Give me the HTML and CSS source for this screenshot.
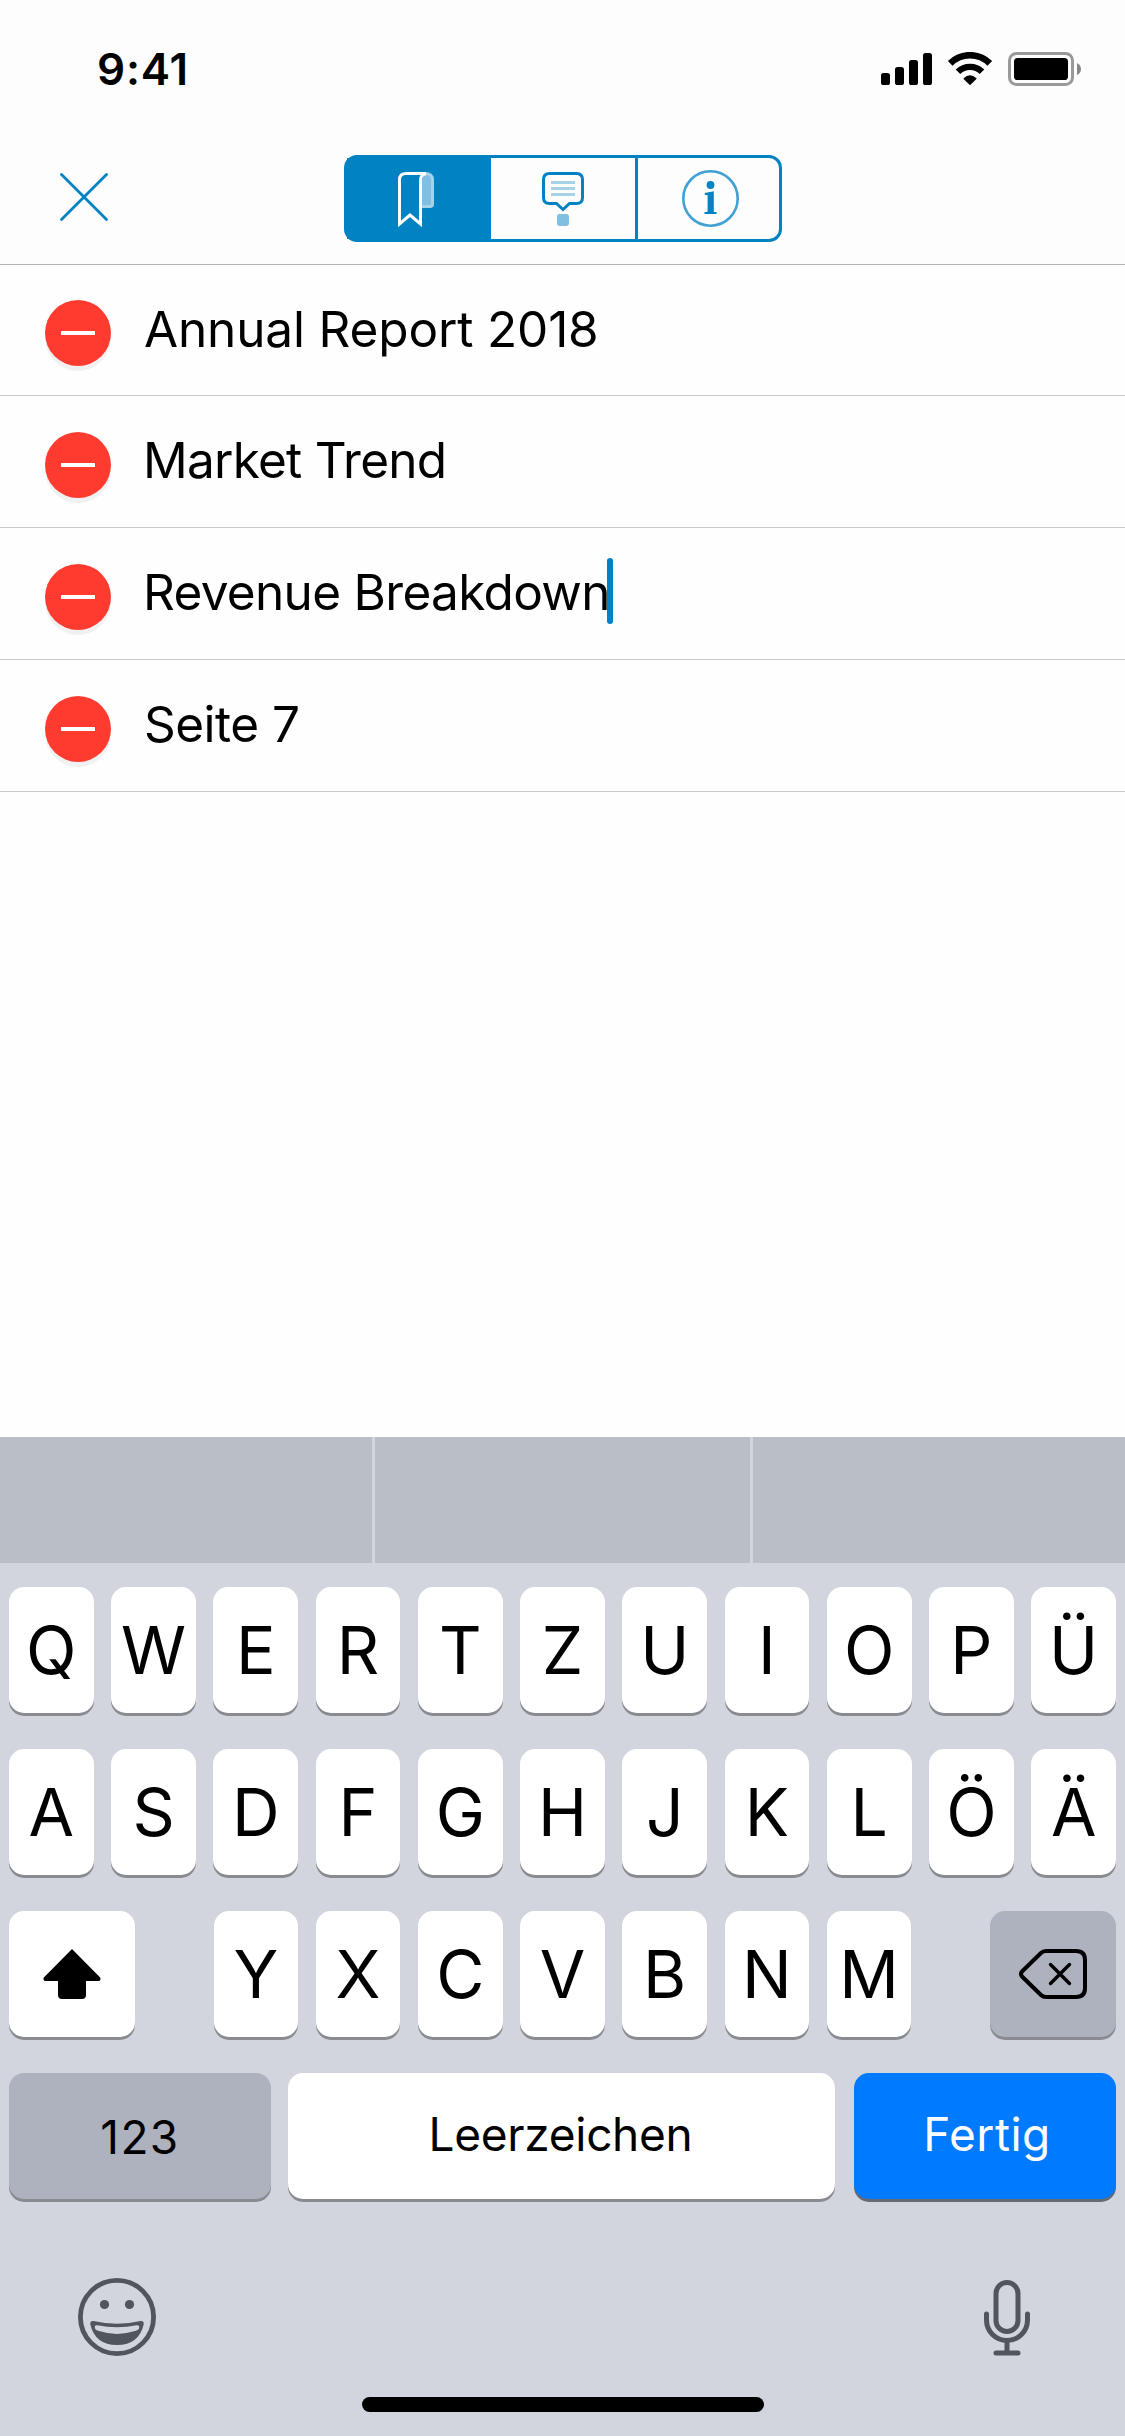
FILE: index.html
```html
<!DOCTYPE html>
<html lang="de">
<head>
<meta charset="utf-8">
<title>Lesezeichen</title>
<link rel="stylesheet" href="styles.css">
</head>
<body>
<div class="screen">
  <header class="header">
    <div class="status">
      <span class="time">9:41</span>
      <div class="status-icons">
        <svg width="51" height="34" viewBox="0 0 51 34">
          <rect x="0" y="21" width="9" height="12" rx="2.6"/>
          <rect x="14" y="15" width="9" height="18" rx="2.6"/>
          <rect x="28" y="8" width="9" height="25" rx="2.6"/>
          <rect x="42" y="1" width="9" height="32" rx="2.6"/>
        </svg>
        <svg width="46" height="34" viewBox="0 0 46 34">
          <path d="M3.200 11.400A28 28 0 0 1 42.800 11.400" fill="none" stroke="#000" stroke-width="6.600"/>
          <path d="M11 19.800A17 17 0 0 1 35 19.800" fill="none" stroke="#000" stroke-width="6.400"/>
          <path d="M16.600 26.200Q23 20.400 29.400 26.200Q29.700 26.600 29.400 27L23.500 32.800Q23 33.300 22.500 32.800L16.600 27Q16.300 26.600 16.600 26.200Z"/>
        </svg>
        <svg width="73" height="34" viewBox="0 0 73 34">
          <rect x="1.500" y="1.500" width="63" height="31" rx="7" fill="none" stroke="#999" stroke-width="3"/>
          <rect x="6" y="6" width="54" height="22" rx="3.600"/>
          <path d="M69 11Q73 13 73 17Q73 21 69 23Z" fill="#878787"/>
        </svg>
      </div>
    </div>
    <nav class="toolbar">
      <button class="close" aria-label="Schließen">
        <svg width="48" height="48" viewBox="0 0 48 48"><path d="M1.500 1.500L46.500 46.500M46.500 1.500L1.500 46.500" fill="none" stroke="#0082c3" stroke-width="2.800" stroke-linecap="round"/></svg>
      </button>
      <div class="segments">
        <button class="segment active" aria-label="Lesezeichen">
          <svg width="36" height="57" viewBox="0 0 36 57" fill="none">
            <path d="M24 8Q25 2 30 2Q34.500 2 34.500 7V32Q34.500 34.500 32 34.500H24Z" fill="#80bfe1"/>
            <path d="M27 1.500Q34.500 1.500 34.500 8V32Q34.500 34.500 32 34.500H24" stroke="#a6d2ea" stroke-width="3"/>
            <path d="M28 1.500H8Q1.500 1.500 1.500 8V52L12 43L22.500 52V8Q22.500 3 28 1.500" stroke="#fff" stroke-width="3"/>
          </svg>
        </button>
        <button class="segment" aria-label="Anmerkungen">
          <svg width="42" height="54" viewBox="0 0 42 54" fill="none">
            <path d="M9 10.500H33M9 16.500H33M9 22.500H33" stroke="#a6d2ea" stroke-width="3"/>
            <path d="M7.500 1.500H34.500Q40.500 1.500 40.500 7.500V25.500Q40.500 31.500 34.500 31.500H27.500L21 37.500L14.500 31.500H7.500Q1.500 31.500 1.500 25.500V7.500Q1.500 1.500 7.500 1.500Z" stroke="#0082c3" stroke-width="3"/>
            <rect x="15" y="42" width="12" height="12" rx="2.400" fill="#80bfe1"/>
          </svg>
        </button>
        <button class="segment info" aria-label="Informationen">
          <svg width="57" height="57" viewBox="0 0 57 57">
            <circle cx="28.500" cy="28.500" r="27.200" fill="none" stroke="#40a1d2" stroke-width="2.600"/>
            <circle cx="28.500" cy="15" r="3.900" fill="#0082c3"/>
            <path d="M22.800 23L31.800 21.200V41.700Q31.800 42 34.500 42V44H22.500V42Q25.600 42 25.600 41.500V25H22.800Z" fill="#0082c3"/>
          </svg>
        </button>
      </div>
    </nav>
  </header>

  <main class="list">
    <div class="row"><span class="delete"></span><span class="label">Annual Report 2018</span></div>
    <div class="row"><span class="delete"></span><span class="label market">Market Trend</span></div>
    <div class="row"><span class="delete"></span><span class="label revenue">Revenue Breakdown</span><span class="caret"></span></div>
    <div class="row"><span class="delete"></span><span class="label page">Seite 7</span></div>
  </main>

  <section class="keyboard">
    <div class="suggestions"><span></span><span></span><span></span></div>
    <div class="keys">
      <div class="key-row letters">
        <span class="key">Q</span><span class="key">W</span><span class="key">E</span><span class="key">R</span><span class="key">T</span><span class="key">Z</span><span class="key">U</span><span class="key">I</span><span class="key">O</span><span class="key">P</span><span class="key umlaut">Ü</span>
      </div>
      <div class="key-row letters">
        <span class="key">A</span><span class="key">S</span><span class="key">D</span><span class="key">F</span><span class="key">G</span><span class="key">H</span><span class="key">J</span><span class="key">K</span><span class="key">L</span><span class="key umlaut">Ö</span><span class="key umlaut">Ä</span>
      </div>
      <div class="key-row third">
        <span class="key wide">
          <svg width="58" height="50" viewBox="0 0 58 50"><path d="M29 0L57.400 28.700Q58 32 55.500 32H43V46Q43 50 39 50H19Q15 50 15 46V32H2.500Q0 32 .600 28.700Z"/></svg>
        </span>
        <div class="letters middle">
          <span class="key">Y</span><span class="key">X</span><span class="key">C</span><span class="key">V</span><span class="key">B</span><span class="key">N</span><span class="key">M</span>
        </div>
        <span class="key wide gray">
          <svg width="68" height="50" viewBox="0 0 68 50" fill="none" stroke="#000" stroke-linecap="round" stroke-linejoin="round">
            <path d="M27 2H57Q66 2 66 11V39Q66 48 57 48H27Q24 48 22 46L3 27.500Q1 25 3 22.500L22 4Q24 2 27 2Z" stroke-width="4"/>
            <path d="M31.500 15.500L50.500 34.500M50.500 15.500L31.500 34.500" stroke-width="3.400"/>
          </svg>
        </span>
      </div>
      <div class="key-row bottom">
        <span class="key gray numbers">123</span>
        <span class="key space">Leerzeichen</span>
        <span class="key done">Fertig</span>
      </div>
    </div>
    <div class="dock">
      <svg width="78" height="78" viewBox="0 0 78 78" fill="#50555e">
        <circle cx="39" cy="39" r="36.600" fill="none" stroke="#50555e" stroke-width="4.800"/>
        <circle cx="26.500" cy="26.500" r="4.600"/>
        <circle cx="51.500" cy="26.500" r="4.600"/>
        <path d="M15.500 43Q39 48.500 62.500 43Q65.800 42.500 65.800 46Q61 67 39 67Q17 67 12.200 46Q12.200 42.500 15.500 43Z"/>
        <path d="M19.300 47.200Q39 51.200 58.700 47.200Q62 47 61 50.500Q60.500 52 58 52.800Q39 59 20 52.800Q17.500 52 17 50.500Q16 47 19.300 47.200Z" fill="#d2d5dd"/>
      </svg>
      <svg width="46" height="76" viewBox="0 0 46 76" fill="none" stroke="#50555e" stroke-width="5" stroke-linecap="round">
        <rect x="12" y="2.500" width="22" height="49" rx="11"/>
        <path d="M2.500 34V40A20.500 20.500 0 0 0 43.500 40V34M23 61V72M12 73H34"/>
      </svg>
    </div>
    <div class="home"></div>
  </section>
</div>
</body>
</html>
```

FILE: styles.css
```css
* { box-sizing: border-box; }

body {
  margin: 0;
  background: #fefefe;
  color: #000;
  font-family: Inter, "Liberation Sans", sans-serif;
}

svg { display: block; flex: none; }

button {
  margin: 0;
  padding: 0;
  border: 0;
  background: none;
}

.screen {
  display: flex;
  flex-direction: column;
  width: 1125px;
  height: 2436px;
  overflow: hidden;
}

.header {
  height: 265px;
  background: #fdfdfd;
  border-bottom: 1px solid #b2b2b2;
}

.status {
  display: flex;
  align-items: center;
  justify-content: space-between;
  height: 138px;
  padding: 0 44px 0 97px;
}

.time {
  font-size: 44px;
  font-weight: 600;
  letter-spacing: 0.8px;
}

.status-icons {
  display: flex;
  gap: 15px;
}

.toolbar {
  display: grid;
  grid-template-columns: 284px 438px;
  padding: 17px 0 0 60px;
}

.close {
  width: 48px;
  height: 48px;
  margin-top: 18px;
}

.segments {
  display: grid;
  grid-template-columns: repeat(3, 144px);
  height: 87px;
  border: 3px solid #0082c3;
  border-radius: 13px;
}

.segment {
  display: flex;
  justify-content: center;
  padding-top: 14px;
}

.segment.active {
  padding-right: 6px;
  background: #0082c3;
}

.segment.info {
  padding: 12px 0 0 3px;
  border-left: 3px solid #0082c3;
}

.list { flex: 1; }

.row {
  display: flex;
  align-items: center;
  height: 132px;
  padding-left: 45px;
  border-bottom: 1px solid #c8c8c8;
}

/* The first row sits directly under the toolbar's border. */
.row:first-child { height: 131px; }

.delete {
  display: flex;
  align-items: center;
  justify-content: center;
  width: 66px;
  height: 66px;
  margin-top: 6px;
  border-radius: 50%;
  background: #ff3b30;
  box-shadow: 0 5px 0 #f1f1f1;
}

.delete::before {
  content: "";
  width: 34px;
  height: 4px;
  background: #fff;
}

.label {
  margin-left: 33px;
  padding-bottom: 3px;
  font-size: 49.5px;
  line-height: 60px;
  letter-spacing: -0.15px;
  white-space: nowrap;
}

.market { margin-left: 32px; letter-spacing: -0.75px; }
.revenue { margin-left: 32px; letter-spacing: -0.68px; }
.page { letter-spacing: -0.5px; }

.caret {
  width: 6px;
  height: 66px;
  margin: 0 0 6px -3px;
  border-radius: 3px;
  background: #0082c3;
}

.keyboard {
  height: 999px;
  background: #d2d5dd;
}

.suggestions {
  display: grid;
  grid-template-columns: 372px 375px 372px;
  gap: 3px;
  height: 126px;
}

.suggestions span { background: #babec7; }

.keys {
  display: flex;
  flex-direction: column;
  gap: 36px;
  padding: 24px 9px 0;
}

.key-row { height: 126px; }

.letters {
  display: grid;
  grid-template-columns: repeat(11, 1fr);
  gap: 17.6px;
}

.key {
  display: flex;
  align-items: center;
  justify-content: center;
  height: 126px;
  border-radius: 15px;
  background: #fff;
  box-shadow: 0 3px 0 #898b90;
  font-size: 66px;
  line-height: 80px;
}

.umlaut { padding-bottom: 1px; }

.third {
  display: flex;
  justify-content: space-between;
}

.middle {
  grid-template-columns: repeat(7, 84.6px);
}

.wide { width: 126px; }

.gray { background: #aeb2be; }

.bottom {
  display: grid;
  grid-template-columns: 262px 547px 262px;
  column-gap: 17px;
}

.bottom .key {
  padding-bottom: 5px;
  font-size: 46px;
  line-height: 56px;
}

.bottom .numbers {
  padding: 1px 0 0;
  letter-spacing: 1.4px;
}

.bottom .space {
  padding-right: 2px;
  letter-spacing: -0.3px;
}

.bottom .done {
  margin-left: 2px;
  margin-right: -2px;
  padding-left: 4px;
  background: #007aff;
  box-shadow: 0 3px 0 #666a72;
  color: #fff;
  letter-spacing: 0.5px;
}

.dock {
  display: flex;
  justify-content: space-between;
  height: 119px;
  margin-top: 79px;
  padding: 0 95px 0 78px;
}

.dock svg:last-child { margin-top: 2px; }

.home {
  width: 402px;
  height: 15px;
  margin: 0 auto;
  border-radius: 8px;
  background: #000;
}
```
